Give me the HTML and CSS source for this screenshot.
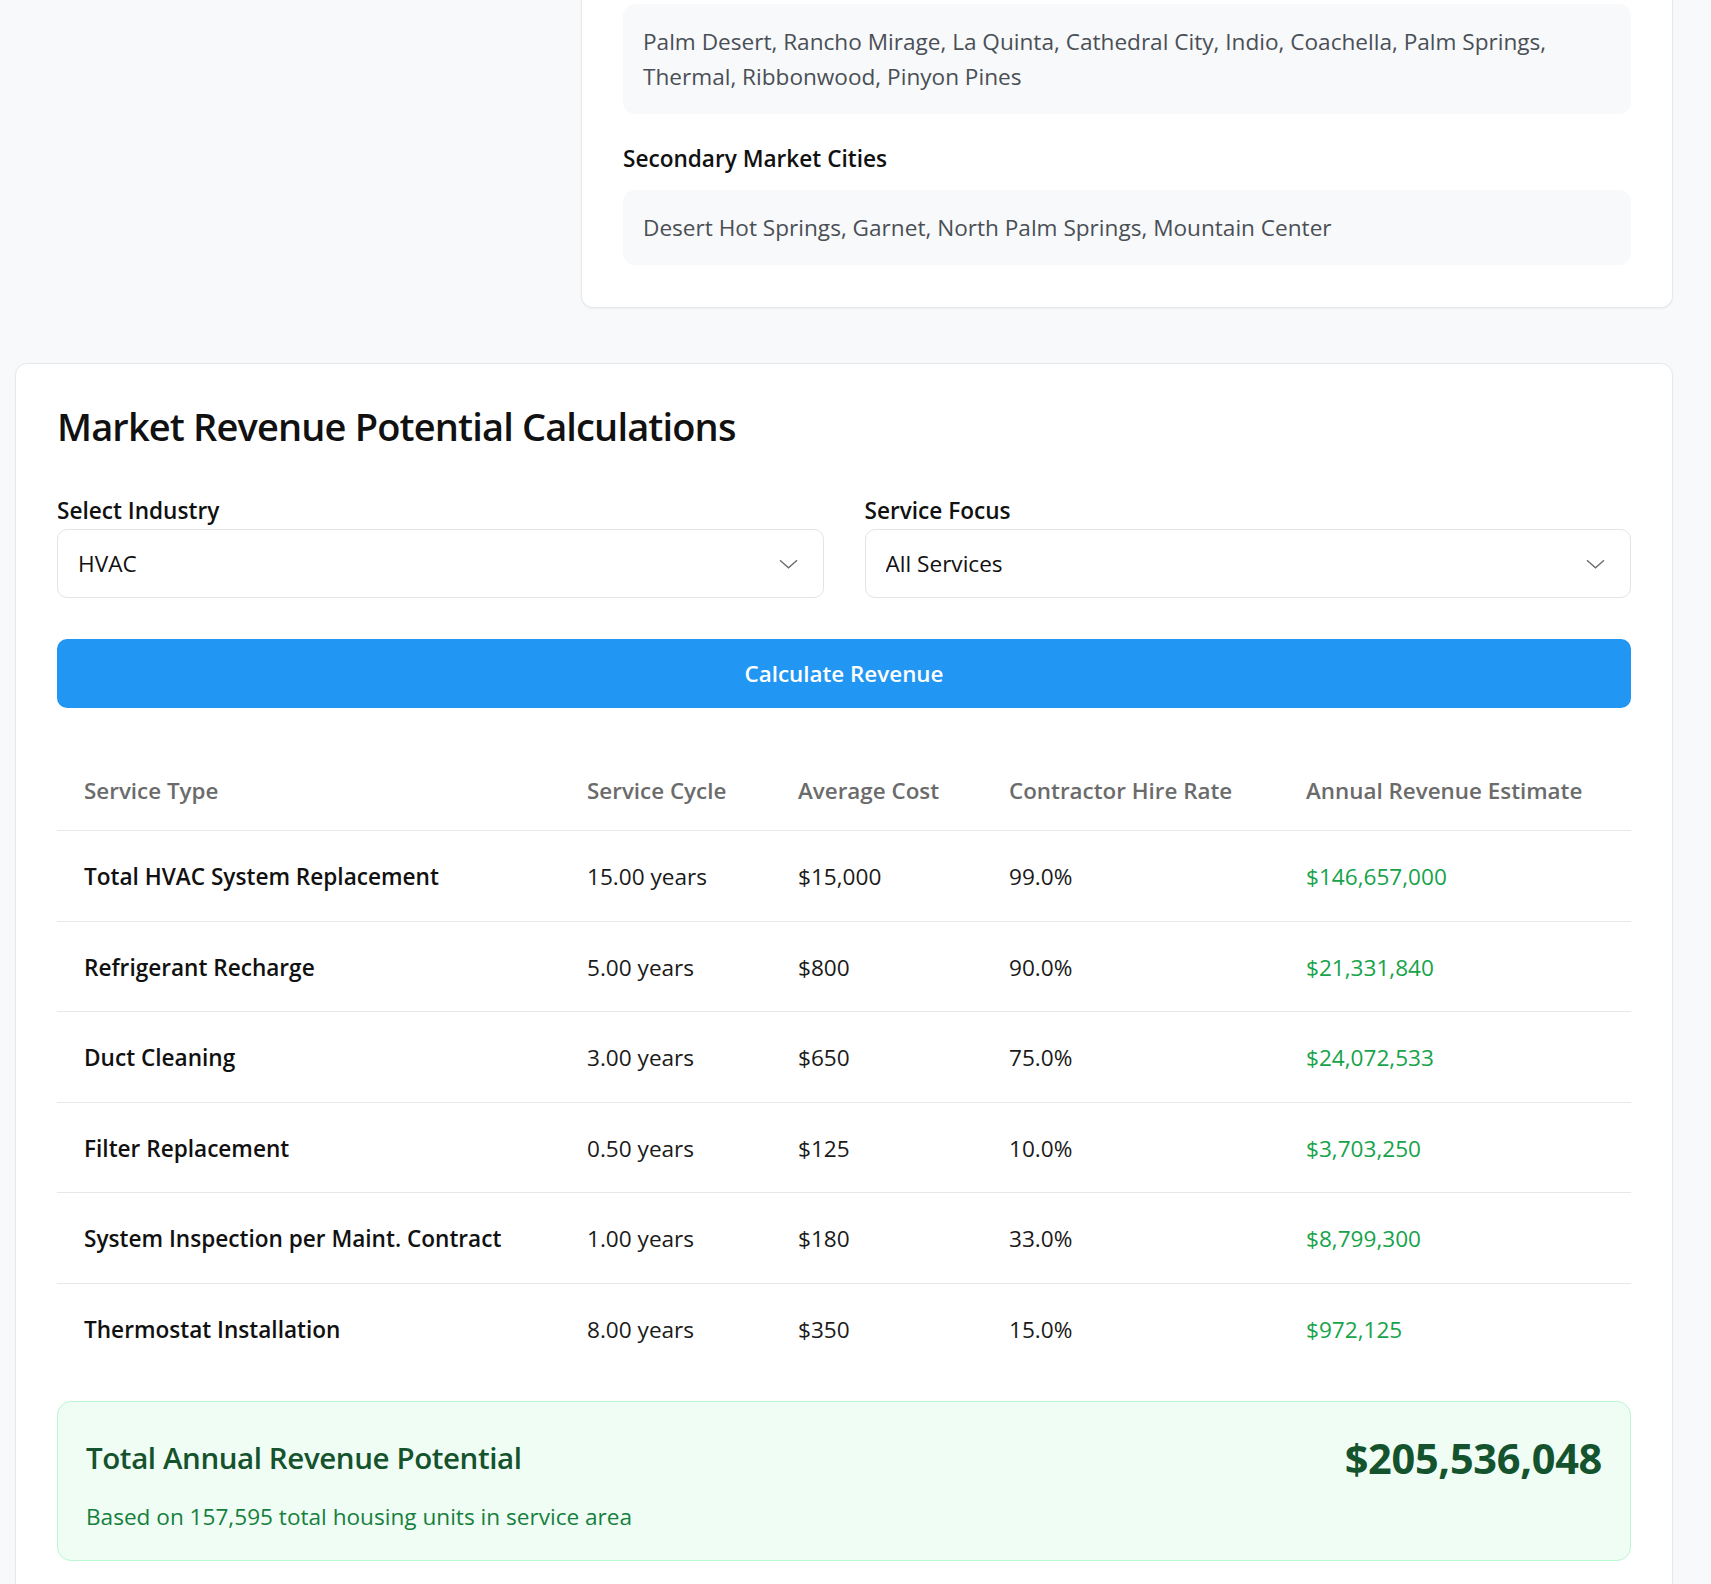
FILE: index.html
```html
<!DOCTYPE html>
<html lang="en">
<head>
<meta charset="utf-8">
<title>Market Revenue Potential</title>
<link rel="stylesheet" href="styles.css">
</head>
<body>
<div class="page">
  <div class="top-row">
    <div class="left-col"></div>
    <section class="card area-card">
      <div class="city-box">Palm Desert, Rancho Mirage, La Quinta, Cathedral City, Indio, Coachella, Palm Springs, Thermal, Ribbonwood, Pinyon Pines</div>
      <h3 class="sub-heading">Secondary Market Cities</h3>
      <div class="city-box">Desert Hot Springs, Garnet, North Palm Springs, Mountain Center</div>
    </section>
  </div>

  <section class="card calc-card">
    <h2 class="calc-title">Market Revenue Potential Calculations</h2>

    <div class="form-grid">
      <div class="field">
        <label class="field-label" for="industry">Select Industry</label>
        <div class="select-wrap">
          <select id="industry" class="select">
            <option>HVAC</option>
          </select>
          <svg class="chevron" viewBox="0 0 20 10" width="20" height="10" aria-hidden="true"><polyline points="1,1 10,9 19,1" fill="none" stroke="#6b6b6b" stroke-width="1.4"/></svg>
        </div>
      </div>
      <div class="field">
        <label class="field-label" for="focus">Service Focus</label>
        <div class="select-wrap">
          <select id="focus" class="select">
            <option>All Services</option>
          </select>
          <svg class="chevron" viewBox="0 0 20 10" width="20" height="10" aria-hidden="true"><polyline points="1,1 10,9 19,1" fill="none" stroke="#6b6b6b" stroke-width="1.4"/></svg>
        </div>
      </div>
    </div>

    <button class="calc-btn" type="button">Calculate Revenue</button>

    <table class="rev-table">
      <thead>
        <tr>
          <th class="c-type">Service Type</th>
          <th class="c-cycle">Service Cycle</th>
          <th class="c-cost">Average Cost</th>
          <th class="c-rate">Contractor Hire Rate</th>
          <th class="c-rev">Annual Revenue Estimate</th>
        </tr>
      </thead>
      <tbody>
        <tr><td class="svc">Total HVAC System Replacement</td><td>15.00 years</td><td>$15,000</td><td>99.0%</td><td class="rev">$146,657,000</td></tr>
        <tr><td class="svc">Refrigerant Recharge</td><td>5.00 years</td><td>$800</td><td>90.0%</td><td class="rev">$21,331,840</td></tr>
        <tr><td class="svc">Duct Cleaning</td><td>3.00 years</td><td>$650</td><td>75.0%</td><td class="rev">$24,072,533</td></tr>
        <tr><td class="svc">Filter Replacement</td><td>0.50 years</td><td>$125</td><td>10.0%</td><td class="rev">$3,703,250</td></tr>
        <tr><td class="svc">System Inspection per Maint. Contract</td><td>1.00 years</td><td>$180</td><td>33.0%</td><td class="rev">$8,799,300</td></tr>
        <tr><td class="svc">Thermostat Installation</td><td>8.00 years</td><td>$350</td><td>15.0%</td><td class="rev">$972,125</td></tr>
      </tbody>
    </table>

    <div class="total-box">
      <div class="total-row">
        <h3 class="total-title">Total Annual Revenue Potential</h3>
        <div class="total-amount">$205,536,048</div>
      </div>
      <p class="total-note">Based on 157,595 total housing units in service area</p>
    </div>
  </section>
</div>
</body>
</html>
```

FILE: styles.css
```css
* { box-sizing: border-box; }

html, body {
  margin: 0;
  padding: 0;
  background: #f8f9fa;
  font-family: "Open Sans", "Noto Sans", "Liberation Sans", sans-serif;
  color: #111;
}

.page {
  padding: 0 38px 40px 15px;
}

.top-row {
  display: grid;
  grid-template-columns: 546px 1fr;
  column-gap: 20px;
}

.card {
  background: #fff;
  border: 1px solid #e6e8eb;
  border-radius: 12px;
  box-shadow: 0 1px 2px rgba(0, 0, 0, 0.05);
}

.area-card {
  border-top: none;
  border-top-left-radius: 0;
  border-top-right-radius: 0;
  padding: 4px 41px 42px;
}

.city-box {
  background: #f8f9fa;
  border-radius: 12px;
  padding: 20px;
  font-size: 22.6px;
  line-height: 35px;
  color: #4a4f56;
}

.sub-heading {
  margin: 28px 0 14px;
  font-size: 22.6px;
  line-height: 34px;
  font-weight: 600;
  color: #111;
}

.calc-card {
  margin-top: 55px;
  padding: 36px 41px 60px;
}

.calc-title {
  margin: 0 0 42px;
  font-size: 38px;
  letter-spacing: -0.85px;
  line-height: 52px;
  font-weight: 600;
  color: #111;
}

.form-grid {
  display: grid;
  grid-template-columns: 1fr 1fr;
  column-gap: 41px;
}

.field-label {
  display: block;
  font-size: 22.6px;
  line-height: 34px;
  font-weight: 600;
  color: #111;
  margin-bottom: 1px;
}

.select-wrap {
  position: relative;
}

.select {
  display: block;
  width: 100%;
  height: 69px;
  appearance: none;
  -webkit-appearance: none;
  background: #fff;
  border: 1px solid #e2e4e7;
  border-radius: 10px;
  padding: 0 60px 0 20px;
  font-family: inherit;
  font-size: 22.6px;
  color: #111;
}

.chevron {
  position: absolute;
  right: 26px;
  top: 30px;
  width: 19px;
  height: 10px;
}

.calc-btn {
  display: block;
  width: 100%;
  height: 69px;
  margin-top: 41px;
  border: none;
  border-radius: 10px;
  background: #2196f3;
  color: #fff;
  font-family: inherit;
  font-size: 22.4px;
  font-weight: 600;
}

.rev-table {
  width: 100%;
  margin-top: 40px;
  border-collapse: collapse;
  table-layout: fixed;
}

.rev-table th {
  text-align: left;
  font-size: 22.4px;
  line-height: 35px;
  font-weight: 600;
  color: #6b6b6b;
  padding: 25px 10px 22px 27px;
  border-bottom: 1px solid #e6e8eb;
}

.c-type { width: 503px; }
.c-cycle { width: 211px; }
.c-cost { width: 211px; }
.c-rate { width: 297px; }

.rev-table td {
  font-size: 22.6px;
  line-height: 35px;
  color: #1a1a1a;
  padding: 28px 10px 26.6px 27px;
  border-bottom: 1px solid #e6e8eb;
}

.rev-table tbody tr:last-child td {
  border-bottom: none;
}

.rev-table td.svc {
  font-weight: 600;
  color: #111;
}

.rev-table td.rev {
  color: #16a34a;
  font-weight: 500;
}

.total-box {
  margin-top: 27px;
  background: #f0fdf4;
  border: 1px solid #bbf7d0;
  border-radius: 14px;
  padding: 28px 28px 26px;
}

.total-row {
  display: flex;
  justify-content: space-between;
  align-items: center;
  height: 57px;
}

.total-title {
  margin: 0;
  font-size: 29.5px;
  letter-spacing: -0.4px;
  line-height: 40px;
  font-weight: 600;
  color: #14532d;
}

.total-amount {
  font-size: 41.5px;
  letter-spacing: -0.3px;
  line-height: 57px;
  font-weight: 700;
  color: #14532d;
}

.total-note {
  margin: 12px 0 0;
  font-size: 22.6px;
  line-height: 35px;
  color: #15803d;
}
```
